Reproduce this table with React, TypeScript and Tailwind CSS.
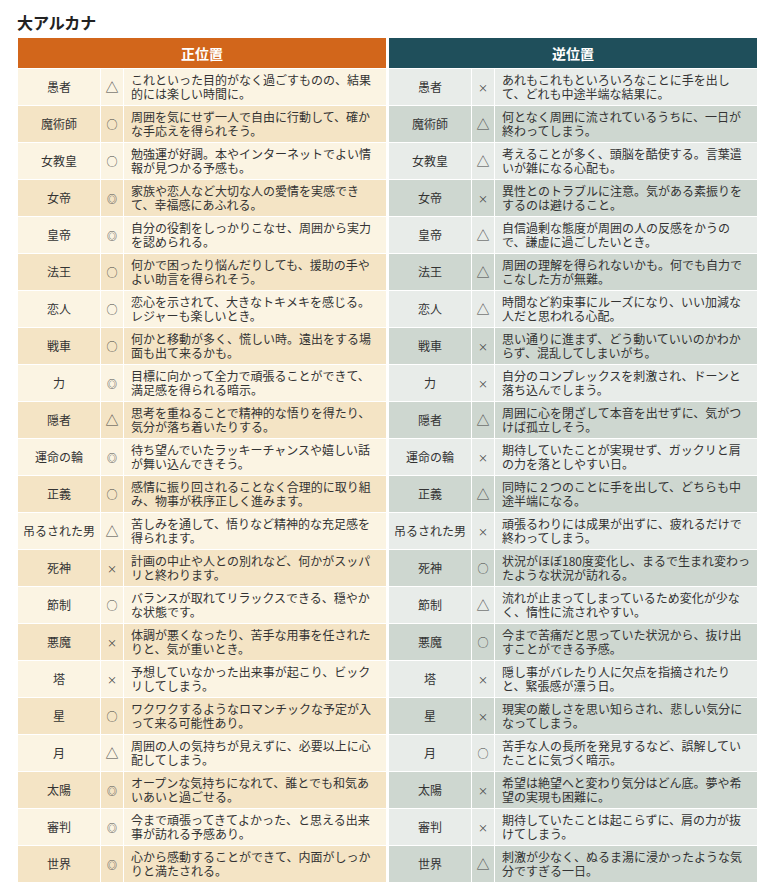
import React from 'react';

type Row = [string, string, string, string];

// [name, mark, line1, line2]
const upright: Row[] = [
  ['愚者', '△', 'これといった目的がなく過ごすものの、結果', '的には楽しい時間に。'],
  ['魔術師', '○', '周囲を気にせず一人で自由に行動して、確か', 'な手応えを得られそう。'],
  ['女教皇', '○', '勉強運が好調。本やインターネットでよい情', '報が見つかる予感も。'],
  ['女帝', '◎', '家族や恋人など大切な人の愛情を実感でき', 'て、幸福感にあふれる。'],
  ['皇帝', '◎', '自分の役割をしっかりこなせ、周囲から実力', 'を認められる。'],
  ['法王', '○', '何かで困ったり悩んだりしても、援助の手や', 'よい助言を得られそう。'],
  ['恋人', '○', '恋心を示されて、大きなトキメキを感じる。', 'レジャーも楽しいとき。'],
  ['戦車', '○', '何かと移動が多く、慌しい時。遠出をする場', '面も出て来るかも。'],
  ['力', '◎', '目標に向かって全力で頑張ることができて、', '満足感を得られる暗示。'],
  ['隠者', '△', '思考を重ねることで精神的な悟りを得たり、', '気分が落ち着いたりする。'],
  ['運命の輪', '◎', '待ち望んでいたラッキーチャンスや嬉しい話', 'が舞い込んできそう。'],
  ['正義', '○', '感情に振り回されることなく合理的に取り組', 'み、物事が秩序正しく進みます。'],
  ['吊るされた男', '△', '苦しみを通して、悟りなど精神的な充足感を', '得られます。'],
  ['死神', '×', '計画の中止や人との別れなど、何かがスッパ', 'リと終わります。'],
  ['節制', '○', 'バランスが取れてリラックスできる、穏やか', 'な状態です。'],
  ['悪魔', '×', '体調が悪くなったり、苦手な用事を任された', 'りと、気が重いとき。'],
  ['塔', '×', '予想していなかった出来事が起こり、ビック', 'リしてしまう。'],
  ['星', '○', 'ワクワクするようなロマンチックな予定が入', 'って来る可能性あり。'],
  ['月', '△', '周囲の人の気持ちが見えずに、必要以上に心', '配してしまう。'],
  ['太陽', '◎', 'オープンな気持ちになれて、誰とでも和気あ', 'いあいと過ごせる。'],
  ['審判', '◎', '今まで頑張ってきてよかった、と思える出来', '事が訪れる予感あり。'],
  ['世界', '◎', '心から感動することができて、内面がしっか', 'りと満たされる。'],
];

const reversed: Row[] = [
  ['愚者', '×', 'あれもこれもといろいろなことに手を出し', 'て、どれも中途半端な結果に。'],
  ['魔術師', '△', '何となく周囲に流されているうちに、一日が', '終わってしまう。'],
  ['女教皇', '△', '考えることが多く、頭脳を酷使する。言葉遣', 'いが雑になる心配も。'],
  ['女帝', '×', '異性とのトラブルに注意。気がある素振りを', 'するのは避けること。'],
  ['皇帝', '△', '自信過剰な態度が周囲の人の反感をかうの', 'で、謙虚に過ごしたいとき。'],
  ['法王', '△', '周囲の理解を得られないかも。何でも自力で', 'こなした方が無難。'],
  ['恋人', '△', '時間など約束事にルーズになり、いい加減な', '人だと思われる心配。'],
  ['戦車', '×', '思い通りに進まず、どう動いていいのかわか', 'らず、混乱してしまいがち。'],
  ['力', '×', '自分のコンプレックスを刺激され、ドーンと', '落ち込んでしまう。'],
  ['隠者', '△', '周囲に心を閉ざして本音を出せずに、気がつ', 'けば孤立しそう。'],
  ['運命の輪', '×', '期待していたことが実現せず、ガックリと肩', 'の力を落としやすい日。'],
  ['正義', '△', '同時に２つのことに手を出して、どちらも中', '途半端になる。'],
  ['吊るされた男', '×', '頑張るわりには成果が出ずに、疲れるだけで', '終わってしまう。'],
  ['死神', '○', '状況がほぼ180度変化し、まるで生まれ変わっ', 'たような状況が訪れる。'],
  ['節制', '△', '流れが止まってしまっているため変化が少な', 'く、惰性に流されやすい。'],
  ['悪魔', '○', '今まで苦痛だと思っていた状況から、抜け出', 'すことができる予感。'],
  ['塔', '×', '隠し事がバレたり人に欠点を指摘されたり', 'と、緊張感が漂う日。'],
  ['星', '×', '現実の厳しさを思い知らされ、悲しい気分に', 'なってしまう。'],
  ['月', '○', '苦手な人の長所を発見するなど、誤解してい', 'たことに気づく暗示。'],
  ['太陽', '×', '希望は絶望へと変わり気分はどん底。夢や希', '望の実現も困難に。'],
  ['審判', '×', '期待していたことは起こらずに、肩の力が抜', 'けてしまう。'],
  ['世界', '△', '刺激が少なく、ぬるま湯に浸かったような気', '分ですぎる一日。'],
];

const Mark: React.FC<{ m: string }> = ({ m }) => {
  if (m === '◎') return <span className="text-[10px] font-bold text-[#555]">◎</span>;
  if (m === '×') return <span className="text-[10px]">×</span>;
  if (m === '○') return <span className="text-[11px]">○</span>;
  return <span className="text-[13px]">{m}</span>;
};

/**
 * One half of the card table (upright or reversed).
 */
const CardTable: React.FC<{ title: string; rows: Row[]; reverse?: boolean }> = ({ title, rows, reverse }) => {
  const head = reverse ? 'bg-[#1f4f5b]' : 'bg-[#d2661b]';
  const light = reverse ? 'bg-[#e8ece9]' : 'bg-[#fbf4e3]';
  const dark = reverse ? 'bg-[#ced7d0]' : 'bg-[#f4e4c5]';

  return (
    <table className="w-[369px] table-fixed border-collapse text-[12px] text-[#333]">
      <colgroup>
        <col className="w-[83px]" />
        <col className="w-[23px]" />
        <col className="w-[263px]" />
      </colgroup>
      <thead>
        <tr>
          <th colSpan={3} className={`${head} h-[31px] border border-white text-center text-[14px] font-bold text-white`}>
            {title}
          </th>
        </tr>
      </thead>
      <tbody>
        {rows.map(([name, mark, l1, l2], i) => (
          <tr key={name} className={`${i % 2 === 0 ? light : dark} h-[37px]`}>
            <td className="border border-white p-0 text-center whitespace-nowrap">{name}</td>
            <td className="border border-white p-0 text-center text-[#444]">
              <Mark m={mark} />
            </td>
            <td className="border border-white py-0 pl-[7px] pr-0 leading-[14px] whitespace-nowrap">
              {l1}
              <br />
              {l2}
            </td>
          </tr>
        ))}
      </tbody>
    </table>
  );
};

const App: React.FC = () => {
  return (
    <div className="min-h-[895px] w-[772px] bg-white px-[17px] pt-[11px] font-['Noto_Sans_CJK_JP','Noto_Sans',sans-serif]">
      <h2 className="mb-[4px] text-[16px] font-bold leading-[22px] text-[#222]">大アルカナ</h2>
      <div className="flex gap-[1px]">
        <CardTable title="正位置" rows={upright} />
        <CardTable title="逆位置" rows={reversed} reverse />
      </div>
    </div>
  );
};

export default App;
